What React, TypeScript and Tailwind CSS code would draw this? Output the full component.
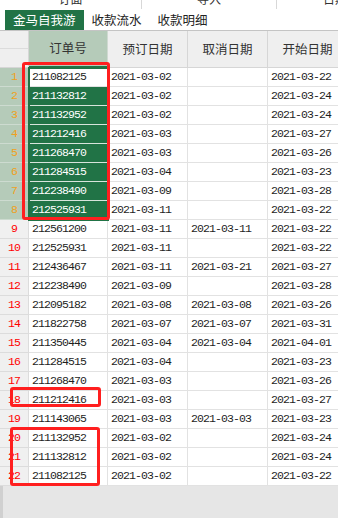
import React from "react";

type Row = [string, string, string, string];

const rows: Row[] = [
  ["211082125", "2021-03-02", "", "2021-03-22"],
  ["211132812", "2021-03-02", "", "2021-03-24"],
  ["211132952", "2021-03-02", "", "2021-03-24"],
  ["211212416", "2021-03-03", "", "2021-03-27"],
  ["211268470", "2021-03-03", "", "2021-03-26"],
  ["211284515", "2021-03-04", "", "2021-03-23"],
  ["212238490", "2021-03-09", "", "2021-03-28"],
  ["212525931", "2021-03-11", "", "2021-03-22"],
  ["212561200", "2021-03-11", "2021-03-11", "2021-03-22"],
  ["212525931", "2021-03-11", "", "2021-03-22"],
  ["212436467", "2021-03-11", "2021-03-21", "2021-03-27"],
  ["212238490", "2021-03-09", "", "2021-03-28"],
  ["212095182", "2021-03-08", "2021-03-08", "2021-03-26"],
  ["211822758", "2021-03-07", "2021-03-07", "2021-03-31"],
  ["211350445", "2021-03-04", "2021-03-04", "2021-04-01"],
  ["211284515", "2021-03-04", "", "2021-03-23"],
  ["211268470", "2021-03-03", "", "2021-03-26"],
  ["211212416", "2021-03-03", "", "2021-03-27"],
  ["211143065", "2021-03-03", "2021-03-03", "2021-03-23"],
  ["211132952", "2021-03-02", "", "2021-03-24"],
  ["211132812", "2021-03-02", "", "2021-03-24"],
  ["211082125", "2021-03-02", "", "2021-03-22"],
];

const mono = "font-['Liberation_Mono',monospace] text-[11.5px] tracking-[-0.9px]";

export default function App() {
  return (
    <div className="relative w-[338px] h-[518px] overflow-hidden bg-white font-['Noto_Sans_CJK_SC',sans-serif] text-[#333] flex flex-col">
      {/* clipped top strip */}
      <div className="h-[9px] overflow-hidden flex shrink-0 text-[12px] leading-[14px] text-[#333]">
        <div className="w-[142px] shrink-0 border-r border-[#d8d8d8] flex justify-center">
          <span className="-mt-[8px]">订面</span>
        </div>
        <div className="w-[135px] shrink-0 border-r border-[#d8d8d8] flex justify-center">
          <span className="-mt-[8px]">导入</span>
        </div>
        <div className="w-[116px] shrink-0 flex justify-center">
          <span className="-mt-[8px]">日期</span>
        </div>
      </div>

      {/* tab bar */}
      <div className="h-[22px] shrink-0 border-b border-[#c4c4c4] flex items-start pl-[5px] pt-[1px] text-[12.5px]">
        <div className="h-[20px] px-[8px] bg-[#217346] text-white flex items-center leading-none">金马自我游</div>
        <div className="h-[20px] px-[8px] text-[#222] flex items-center leading-none">收款流水</div>
        <div className="h-[20px] px-[8px] text-[#222] flex items-center leading-none">收款明细</div>
      </div>

      {/* header row */}
      <div className="flex h-[37px] shrink-0 text-[12.5px] text-[#333]">
        <div className="w-[29px] shrink-0 bg-[#efefef] border-r border-b border-[#d6d6d6] flex flex-col">
          <div className="h-[18px] border-b border-[#dcdcdc]" />
        </div>
        <div className="w-[79px] shrink-0 bg-[#b5cbb9] border-r border-[#cfd9d1] border-b-2 border-b-[#217346] flex items-center justify-center">
          订单号
        </div>
        <div className="w-[80px] shrink-0 bg-[#efefef] border-r border-b border-[#d6d6d6] flex items-center justify-center">
          预订日期
        </div>
        <div className="w-[80px] shrink-0 bg-[#efefef] border-r border-b border-[#d6d6d6] flex items-center justify-center">
          取消日期
        </div>
        <div className="w-[80px] shrink-0 bg-[#efefef] border-r border-b border-[#d6d6d6] flex items-center justify-center">
          开始日期
        </div>
      </div>

      {/* data rows */}
      <div className="flex flex-col shrink-0">
        {rows.map((r, i) => {
          const sel = i < 8;
          const active = i === 0;
          return (
            <div key={i} className={`flex h-[19px] ${mono} text-[#1e1e1e]`}>
              <div
                className={
                  sel
                    ? "w-[29px] shrink-0 bg-[#b5cbb9] border-r border-b border-[#cddbd0] text-[#f0a020] flex items-center justify-center"
                    : "w-[29px] shrink-0 bg-[#f0f0f0] border-r border-b border-[#dcdcdc] text-[#ff0000] flex items-center justify-center"
                }
              >
                {i + 1}
              </div>
              <div
                className={
                  sel && !active
                    ? "w-[79px] shrink-0 bg-[#217346] text-white border-b border-[#d8e4dc] pl-[3px] flex items-center"
                    : "w-[79px] shrink-0 bg-white border-r border-b border-[#e2e2e2] pl-[3px] flex items-center"
                }
              >
                {r[0]}
              </div>
              <div className="w-[80px] shrink-0 border-r border-b border-[#e2e2e2] pl-[3px] flex items-center">{r[1]}</div>
              <div className="w-[80px] shrink-0 border-r border-b border-[#e2e2e2] pl-[3px] flex items-center">{r[2]}</div>
              <div className="w-[80px] shrink-0 border-r border-b border-[#e2e2e2] pl-[3px] flex items-center">{r[3]}</div>
            </div>
          );
        })}
      </div>

      {/* empty area */}
      <div className="flex-1 bg-[#e6e6e6] border-l-[3px] border-[#d0d0d0]" />

      {/* selection outline */}
      <div className="absolute left-[28px] top-[67px] w-[81px] h-[154px] border-2 border-[#217346] pointer-events-none" />

      {/* red annotation boxes */}
      <div className="absolute left-[22px] top-[62px] w-[88px] h-[158px] border-[3px] border-[#ff1f1f] rounded-[3px]" />
      <div className="absolute left-[10px] top-[387px] w-[91px] h-[20px] border-[3px] border-[#ff1f1f] rounded-[3px]" />
      <div className="absolute left-[10px] top-[427px] w-[90px] h-[59px] border-[3px] border-[#ff1f1f] rounded-[3px]" />
    </div>
  );
}
